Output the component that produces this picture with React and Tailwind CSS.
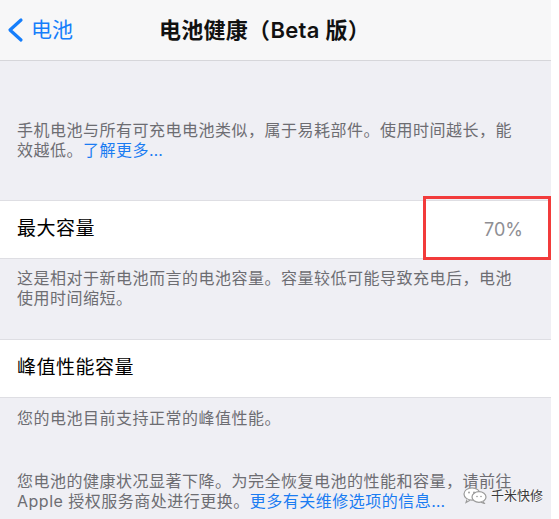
const FONT = { fontFamily: 'Inter, "Noto Sans CJK SC", sans-serif' }

function BackChevron() {
  return (
    <svg width="18" height="26" viewBox="0 0 18 26" className="shrink-0">
      <polyline
        points="15,3 4,13 15,23"
        fill="none"
        stroke="#157efb"
        strokeWidth="3.2"
        strokeLinecap="round"
        strokeLinejoin="round"
      />
    </svg>
  )
}

function WeChatMark() {
  return (
    <svg width="25" height="17" viewBox="0 0 25 17" className="shrink-0">
      <ellipse cx="9" cy="7" rx="8" ry="6.2" fill="#fff" stroke="#9a9a9a" strokeWidth="1.2" />
      <path d="M4 12.5 L3 15.5 L7 13.2" fill="#fff" stroke="#9a9a9a" strokeWidth="1.1" />
      <ellipse cx="16" cy="10" rx="7" ry="5.4" fill="#fff" stroke="#9a9a9a" strokeWidth="1.2" />
      <path d="M20 14.6 L21.5 16.6 L18 15.2" fill="#fff" stroke="#9a9a9a" strokeWidth="1.1" />
      <circle cx="6" cy="5.5" r="0.9" fill="#9a9a9a" />
      <circle cx="11" cy="5.5" r="0.9" fill="#9a9a9a" />
      <circle cx="14" cy="9.5" r="0.8" fill="#9a9a9a" />
      <circle cx="18" cy="9.5" r="0.8" fill="#9a9a9a" />
    </svg>
  )
}

function Footnote({ children, className = '' }) {
  return (
    <p
      className={`pl-[17px] pr-[32px] text-[16px] leading-[20px] tracking-[0.5px] text-[#6d6d72] ${className}`}
    >
      {children}
    </p>
  )
}

function Row({ label, value, highlight }) {
  return (
    <div className="relative flex h-[59px] items-center justify-between border-y border-[#dedee3] bg-white pl-[17px] pr-[28px]">
      <span className="text-[19px] tracking-[0.5px] text-black">{label}</span>
      {value && <span className="text-[18px] text-[#8e8e93]">{value}</span>}
      {highlight && (
        <div className="absolute right-0 top-[-5px] h-[64px] w-[128px] border-[3px] border-[#f23b3b]" />
      )}
    </div>
  )
}

export default function App() {
  return (
    <div className="flex h-[519px] w-[559px] overflow-hidden bg-white" style={FONT}>
      <div className="relative flex w-[551px] flex-col bg-[#efeff4]">
        <header className="relative flex h-[61px] shrink-0 items-center justify-center border-b border-[#d6d6da] bg-[#f7f7f8]">
          <div className="absolute left-[6px] top-0 flex h-full items-center gap-[7px]">
            <BackChevron />
            <span className="text-[21px] text-[#157efb]">电池</span>
          </div>
          <h1 className="pr-[22px] text-[22px] font-semibold tracking-[0.3px] text-[#111]">
            电池健康（Beta 版）
          </h1>
        </header>

        <Footnote className="mt-[59px]">
          手机电池与所有可充电电池类似，属于易耗部件。使用时间越长，能效越低。
          <span className="text-[#1a7cf2]">了解更多…</span>
        </Footnote>

        <div className="mt-[40px]">
          <Row label="最大容量" value="70%" highlight />
        </div>

        <Footnote className="mt-[9px]">
          这是相对于新电池而言的电池容量。容量较低可能导致充电后，电池使用时间缩短。
        </Footnote>

        <div className="mt-[31px]">
          <Row label="峰值性能容量" />
        </div>

        <Footnote className="mt-[10px]">您的电池目前支持正常的峰值性能。</Footnote>

        <Footnote className="mt-[43px]">
          您电池的健康状况显著下降。为完全恢复电池的性能和容量，请前往Apple 授权服务商处进行更换。
          <span className="text-[#1a7cf2]">更多有关维修选项的信息…</span>
        </Footnote>

        <div className="absolute left-[463px] top-[486px] flex items-center gap-[3px]">
          <WeChatMark />
          <span className="text-[13px] text-[#3a3a3a] [text-shadow:0_0_2px_#fff,0_0_2px_#fff]">千米快修</span>
        </div>
      </div>
      <div className="w-[8px] bg-white" />
    </div>
  )
}
